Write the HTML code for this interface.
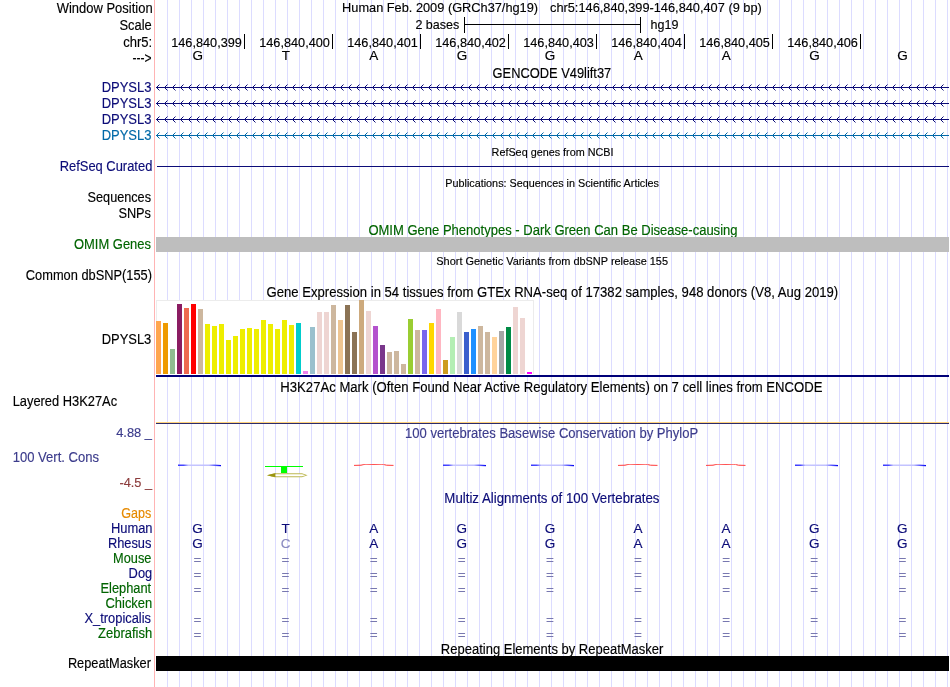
<!DOCTYPE html>
<html lang="en"><head><meta charset="utf-8"><title>UCSC Genome Browser - chr5:146,840,399-146,840,407</title>
<style>
html,body{margin:0;padding:0;background:#fff;}
svg{display:block;font-family:"Liberation Sans", sans-serif;will-change:transform;}
text{white-space:pre;stroke-width:0.15px;}
</style></head><body>
<svg width="950" height="687" viewBox="0 0 950 687">
<rect width="950" height="687" fill="#fff"/>
<path d="M167.5,0V687M179.5,0V687M191.5,0V687M203.5,0V687M215.5,0V687M227.5,0V687M239.5,0V687M251.5,0V687M263.5,0V687M275.5,0V687M287.5,0V687M299.5,0V687M311.5,0V687M323.5,0V687M335.5,0V687M347.5,0V687M359.5,0V687M371.5,0V687M383.5,0V687M395.5,0V687M407.5,0V687M419.5,0V687M431.5,0V687M443.5,0V687M455.5,0V687M467.5,0V687M479.5,0V687M491.5,0V687M503.5,0V687M515.5,0V687M527.5,0V687M539.5,0V687M551.5,0V687M563.5,0V687M575.5,0V687M587.5,0V687M599.5,0V687M611.5,0V687M623.5,0V687M635.5,0V687M647.5,0V687M659.5,0V687M671.5,0V687M683.5,0V687M695.5,0V687M707.5,0V687M719.5,0V687M731.5,0V687M743.5,0V687M755.5,0V687M767.5,0V687M779.5,0V687M791.5,0V687M803.5,0V687M815.5,0V687M827.5,0V687M839.5,0V687M851.5,0V687M863.5,0V687M875.5,0V687M887.5,0V687M899.5,0V687M911.5,0V687M923.5,0V687M935.5,0V687M947.5,0V687" stroke="#dcdcff" stroke-width="1" fill="none" shape-rendering="crispEdges"/>
<rect x="154" y="0" width="1" height="687" fill="#ffb4b4" shape-rendering="crispEdges"/>
<text x="56.7" y="12.5" text-anchor="start" fill="#000" stroke="#000" font-size="14" textLength="95.93" lengthAdjust="spacingAndGlyphs">Window Position</text>
<text x="119.5" y="29.5" text-anchor="start" fill="#000" stroke="#000" font-size="14" textLength="32.2" lengthAdjust="spacingAndGlyphs">Scale</text>
<text x="123.2" y="46.5" text-anchor="start" fill="#000" stroke="#000" font-size="14" textLength="28.93" lengthAdjust="spacingAndGlyphs">chr5:</text>
<text x="132.4" y="62.5" text-anchor="start" fill="#000" stroke="#000" font-size="14" textLength="19.05" lengthAdjust="spacingAndGlyphs">---&gt;</text>
<text x="101.67" y="91.5" text-anchor="start" fill="#0c0c78" stroke="#0c0c78" font-size="14" textLength="49.73" lengthAdjust="spacingAndGlyphs">DPYSL3</text>
<text x="101.67" y="107.5" text-anchor="start" fill="#0c0c78" stroke="#0c0c78" font-size="14" textLength="49.73" lengthAdjust="spacingAndGlyphs">DPYSL3</text>
<text x="101.67" y="123.5" text-anchor="start" fill="#0c0c78" stroke="#0c0c78" font-size="14" textLength="49.73" lengthAdjust="spacingAndGlyphs">DPYSL3</text>
<text x="101.67" y="139.5" text-anchor="start" fill="#0169a8" stroke="#0169a8" font-size="14" textLength="49.73" lengthAdjust="spacingAndGlyphs">DPYSL3</text>
<text x="59.68" y="170.5" text-anchor="start" fill="#0c0c78" stroke="#0c0c78" font-size="14" textLength="92.65" lengthAdjust="spacingAndGlyphs">RefSeq Curated</text>
<text x="87.6" y="201.5" text-anchor="start" fill="#000" stroke="#000" font-size="14" textLength="63.4" lengthAdjust="spacingAndGlyphs">Sequences</text>
<text x="118.4" y="217.5" text-anchor="start" fill="#000" stroke="#000" font-size="14" textLength="32.6" lengthAdjust="spacingAndGlyphs">SNPs</text>
<text x="74.0" y="248.5" text-anchor="start" fill="#006400" stroke="#006400" font-size="14" textLength="77.0" lengthAdjust="spacingAndGlyphs">OMIM Genes</text>
<text x="25.8" y="279.7" text-anchor="start" fill="#000" stroke="#000" font-size="14" textLength="126.21" lengthAdjust="spacingAndGlyphs">Common dbSNP(155)</text>
<text x="101.78" y="344" text-anchor="start" fill="#000" stroke="#000" font-size="14" textLength="49.53" lengthAdjust="spacingAndGlyphs">DPYSL3</text>
<text x="12.68" y="405.8" text-anchor="start" fill="#000" stroke="#000" font-size="14" textLength="104.42" lengthAdjust="spacingAndGlyphs">Layered H3K27Ac</text>
<text x="116.2" y="437" text-anchor="start" fill="#3c3c8c" stroke="#3c3c8c" font-size="13.2" textLength="35.85" lengthAdjust="spacingAndGlyphs">4.88 _</text>
<text x="12.67" y="461.5" text-anchor="start" fill="#3c3c8c" stroke="#3c3c8c" font-size="14" textLength="86.33" lengthAdjust="spacingAndGlyphs">100 Vert. Cons</text>
<text x="119.4" y="487" text-anchor="start" fill="#8c3c3c" stroke="#8c3c3c" font-size="13.2" textLength="32.66" lengthAdjust="spacingAndGlyphs">-4.5 _</text>
<text x="121.2" y="517.5" text-anchor="start" fill="#e68a00" stroke="#e68a00" font-size="14" textLength="30.0" lengthAdjust="spacingAndGlyphs">Gaps</text>
<text x="110.88" y="532.5" text-anchor="start" fill="#0c0c78" stroke="#0c0c78" font-size="14" textLength="41.65" lengthAdjust="spacingAndGlyphs">Human</text>
<text x="107.88" y="547.5" text-anchor="start" fill="#0c0c78" stroke="#0c0c78" font-size="14" textLength="43.52" lengthAdjust="spacingAndGlyphs">Rhesus</text>
<text x="113.09" y="562.5" text-anchor="start" fill="#006400" stroke="#006400" font-size="14" textLength="38.32" lengthAdjust="spacingAndGlyphs">Mouse</text>
<text x="128.58" y="577.5" text-anchor="start" fill="#0c0c78" stroke="#0c0c78" font-size="14" textLength="23.64" lengthAdjust="spacingAndGlyphs">Dog</text>
<text x="100.48" y="592.5" text-anchor="start" fill="#006400" stroke="#006400" font-size="14" textLength="50.72" lengthAdjust="spacingAndGlyphs">Elephant</text>
<text x="105.5" y="607.5" text-anchor="start" fill="#006400" stroke="#006400" font-size="14" textLength="46.73" lengthAdjust="spacingAndGlyphs">Chicken</text>
<text x="84.5" y="622.5" text-anchor="start" fill="#0c0c78" stroke="#0c0c78" font-size="14" textLength="66.5" lengthAdjust="spacingAndGlyphs">X_tropicalis</text>
<text x="98.1" y="637.5" text-anchor="start" fill="#006400" stroke="#006400" font-size="14" textLength="54.13" lengthAdjust="spacingAndGlyphs">Zebrafish</text>
<text x="67.89" y="667.5" text-anchor="start" fill="#000" stroke="#000" font-size="14" textLength="83.1" lengthAdjust="spacingAndGlyphs">RepeatMasker</text>
<text x="342.06" y="11.6" text-anchor="start" fill="#000" stroke="#000" font-size="13.6" textLength="196.04" lengthAdjust="spacingAndGlyphs">Human Feb. 2009 (GRCh37/hg19)</text>
<text x="550.0" y="11.6" text-anchor="start" fill="#000" stroke="#000" font-size="13.2" textLength="211.78" lengthAdjust="spacingAndGlyphs">chr5:146,840,399-146,840,407 (9 bp)</text>
<text x="415.4" y="29.2" text-anchor="start" fill="#000" stroke="#000" font-size="13.5" textLength="43.77" lengthAdjust="spacingAndGlyphs">2 bases</text>
<rect x="464" y="17" width="1" height="16" fill="#000" shape-rendering="crispEdges"/>
<rect x="640" y="17" width="1" height="16" fill="#000" shape-rendering="crispEdges"/>
<rect x="464" y="24" width="177" height="1" fill="#000" shape-rendering="crispEdges"/>
<text x="650.6" y="29.2" text-anchor="start" fill="#000" stroke="#000" font-size="13.5" textLength="27.87" lengthAdjust="spacingAndGlyphs">hg19</text>
<rect x="244" y="34" width="1" height="15" fill="#000" shape-rendering="crispEdges"/>
<text x="171.24" y="47" text-anchor="start" fill="#000" stroke="#000" font-size="13.2" textLength="70.69" lengthAdjust="spacingAndGlyphs">146,840,399</text>
<text x="197.65555555555554" y="60.2" text-anchor="middle" fill="#000" stroke="#000" font-size="13.5">G</text>
<rect x="332" y="34" width="1" height="15" fill="#000" shape-rendering="crispEdges"/>
<text x="259.24" y="47" text-anchor="start" fill="#000" stroke="#000" font-size="13.2" textLength="70.69" lengthAdjust="spacingAndGlyphs">146,840,400</text>
<text x="285.7666666666667" y="60.2" text-anchor="middle" fill="#000" stroke="#000" font-size="13.5">T</text>
<rect x="420" y="34" width="1" height="15" fill="#000" shape-rendering="crispEdges"/>
<text x="347.24" y="47" text-anchor="start" fill="#000" stroke="#000" font-size="13.2" textLength="70.69" lengthAdjust="spacingAndGlyphs">146,840,401</text>
<text x="373.8777777777778" y="60.2" text-anchor="middle" fill="#000" stroke="#000" font-size="13.5">A</text>
<rect x="508" y="34" width="1" height="15" fill="#000" shape-rendering="crispEdges"/>
<text x="435.24" y="47" text-anchor="start" fill="#000" stroke="#000" font-size="13.2" textLength="70.69" lengthAdjust="spacingAndGlyphs">146,840,402</text>
<text x="461.98888888888894" y="60.2" text-anchor="middle" fill="#000" stroke="#000" font-size="13.5">G</text>
<rect x="596" y="34" width="1" height="15" fill="#000" shape-rendering="crispEdges"/>
<text x="523.24" y="47" text-anchor="start" fill="#000" stroke="#000" font-size="13.2" textLength="70.69" lengthAdjust="spacingAndGlyphs">146,840,403</text>
<text x="550.1" y="60.2" text-anchor="middle" fill="#000" stroke="#000" font-size="13.5">G</text>
<rect x="684" y="34" width="1" height="15" fill="#000" shape-rendering="crispEdges"/>
<text x="611.24" y="47" text-anchor="start" fill="#000" stroke="#000" font-size="13.2" textLength="70.69" lengthAdjust="spacingAndGlyphs">146,840,404</text>
<text x="638.2111111111111" y="60.2" text-anchor="middle" fill="#000" stroke="#000" font-size="13.5">A</text>
<rect x="772" y="34" width="1" height="15" fill="#000" shape-rendering="crispEdges"/>
<text x="699.24" y="47" text-anchor="start" fill="#000" stroke="#000" font-size="13.2" textLength="70.69" lengthAdjust="spacingAndGlyphs">146,840,405</text>
<text x="726.3222222222223" y="60.2" text-anchor="middle" fill="#000" stroke="#000" font-size="13.5">A</text>
<rect x="860" y="34" width="1" height="15" fill="#000" shape-rendering="crispEdges"/>
<text x="787.24" y="47" text-anchor="start" fill="#000" stroke="#000" font-size="13.2" textLength="70.69" lengthAdjust="spacingAndGlyphs">146,840,406</text>
<text x="814.4333333333334" y="60.2" text-anchor="middle" fill="#000" stroke="#000" font-size="13.5">G</text>
<text x="902.5444444444445" y="60.2" text-anchor="middle" fill="#000" stroke="#000" font-size="13.5">G</text>
<text x="492.6" y="77.5" text-anchor="start" fill="#000" stroke="#000" font-size="14" textLength="118.6" lengthAdjust="spacingAndGlyphs">GENCODE V49lift37</text>
<text x="491.6" y="156" text-anchor="start" fill="#000" stroke="#000" font-size="11" textLength="121.96" lengthAdjust="spacingAndGlyphs">RefSeq genes from NCBI</text>
<text x="445.3" y="187" text-anchor="start" fill="#000" stroke="#000" font-size="11" textLength="213.71" lengthAdjust="spacingAndGlyphs">Publications: Sequences in Scientific Articles</text>
<text x="368.4" y="234.5" text-anchor="start" fill="#006400" stroke="#006400" font-size="14" textLength="369.13" lengthAdjust="spacingAndGlyphs">OMIM Gene Phenotypes - Dark Green Can Be Disease-causing</text>
<text x="436.3" y="265" text-anchor="start" fill="#000" stroke="#000" font-size="11" textLength="231.72" lengthAdjust="spacingAndGlyphs">Short Genetic Variants from dbSNP release 155</text>
<text x="266.6" y="296.5" text-anchor="start" fill="#000" stroke="#000" font-size="14" textLength="571.62" lengthAdjust="spacingAndGlyphs">Gene Expression in 54 tissues from GTEx RNA-seq of 17382 samples, 948 donors (V8, Aug 2019)</text>
<text x="280.36" y="391.6" text-anchor="start" fill="#000" stroke="#000" font-size="14" textLength="542.05" lengthAdjust="spacingAndGlyphs">H3K27Ac Mark (Often Found Near Active Regulatory Elements) on 7 cell lines from ENCODE</text>
<text x="405.07" y="437.6" text-anchor="start" fill="#3c3c8c" stroke="#3c3c8c" font-size="14" textLength="293.15" lengthAdjust="spacingAndGlyphs">100 vertebrates Basewise Conservation by PhyloP</text>
<text x="444.36" y="503.4" text-anchor="start" fill="#0c0c78" stroke="#0c0c78" font-size="14" textLength="215.14" lengthAdjust="spacingAndGlyphs">Multiz Alignments of 100 Vertebrates</text>
<text x="440.87" y="653.5" text-anchor="start" fill="#000" stroke="#000" font-size="14" textLength="222.51" lengthAdjust="spacingAndGlyphs">Repeating Elements by RepeatMasker</text>
<rect x="156" y="87" width="793" height="1" fill="#0c0c78" shape-rendering="crispEdges"/>
<path d="M159.5,84.5L156.5,87.5L159.5,90.5M167.5,84.5L164.5,87.5L167.5,90.5M175.5,84.5L172.5,87.5L175.5,90.5M183.5,84.5L180.5,87.5L183.5,90.5M191.5,84.5L188.5,87.5L191.5,90.5M199.5,84.5L196.5,87.5L199.5,90.5M207.5,84.5L204.5,87.5L207.5,90.5M215.5,84.5L212.5,87.5L215.5,90.5M223.5,84.5L220.5,87.5L223.5,90.5M231.5,84.5L228.5,87.5L231.5,90.5M239.5,84.5L236.5,87.5L239.5,90.5M247.5,84.5L244.5,87.5L247.5,90.5M255.5,84.5L252.5,87.5L255.5,90.5M263.5,84.5L260.5,87.5L263.5,90.5M271.5,84.5L268.5,87.5L271.5,90.5M279.5,84.5L276.5,87.5L279.5,90.5M287.5,84.5L284.5,87.5L287.5,90.5M295.5,84.5L292.5,87.5L295.5,90.5M303.5,84.5L300.5,87.5L303.5,90.5M311.5,84.5L308.5,87.5L311.5,90.5M319.5,84.5L316.5,87.5L319.5,90.5M327.5,84.5L324.5,87.5L327.5,90.5M335.5,84.5L332.5,87.5L335.5,90.5M343.5,84.5L340.5,87.5L343.5,90.5M351.5,84.5L348.5,87.5L351.5,90.5M359.5,84.5L356.5,87.5L359.5,90.5M367.5,84.5L364.5,87.5L367.5,90.5M375.5,84.5L372.5,87.5L375.5,90.5M383.5,84.5L380.5,87.5L383.5,90.5M391.5,84.5L388.5,87.5L391.5,90.5M399.5,84.5L396.5,87.5L399.5,90.5M407.5,84.5L404.5,87.5L407.5,90.5M415.5,84.5L412.5,87.5L415.5,90.5M423.5,84.5L420.5,87.5L423.5,90.5M431.5,84.5L428.5,87.5L431.5,90.5M439.5,84.5L436.5,87.5L439.5,90.5M447.5,84.5L444.5,87.5L447.5,90.5M455.5,84.5L452.5,87.5L455.5,90.5M463.5,84.5L460.5,87.5L463.5,90.5M471.5,84.5L468.5,87.5L471.5,90.5M479.5,84.5L476.5,87.5L479.5,90.5M487.5,84.5L484.5,87.5L487.5,90.5M495.5,84.5L492.5,87.5L495.5,90.5M503.5,84.5L500.5,87.5L503.5,90.5M511.5,84.5L508.5,87.5L511.5,90.5M519.5,84.5L516.5,87.5L519.5,90.5M527.5,84.5L524.5,87.5L527.5,90.5M535.5,84.5L532.5,87.5L535.5,90.5M543.5,84.5L540.5,87.5L543.5,90.5M551.5,84.5L548.5,87.5L551.5,90.5M559.5,84.5L556.5,87.5L559.5,90.5M567.5,84.5L564.5,87.5L567.5,90.5M575.5,84.5L572.5,87.5L575.5,90.5M583.5,84.5L580.5,87.5L583.5,90.5M591.5,84.5L588.5,87.5L591.5,90.5M599.5,84.5L596.5,87.5L599.5,90.5M607.5,84.5L604.5,87.5L607.5,90.5M615.5,84.5L612.5,87.5L615.5,90.5M623.5,84.5L620.5,87.5L623.5,90.5M631.5,84.5L628.5,87.5L631.5,90.5M639.5,84.5L636.5,87.5L639.5,90.5M647.5,84.5L644.5,87.5L647.5,90.5M655.5,84.5L652.5,87.5L655.5,90.5M663.5,84.5L660.5,87.5L663.5,90.5M671.5,84.5L668.5,87.5L671.5,90.5M679.5,84.5L676.5,87.5L679.5,90.5M687.5,84.5L684.5,87.5L687.5,90.5M695.5,84.5L692.5,87.5L695.5,90.5M703.5,84.5L700.5,87.5L703.5,90.5M711.5,84.5L708.5,87.5L711.5,90.5M719.5,84.5L716.5,87.5L719.5,90.5M727.5,84.5L724.5,87.5L727.5,90.5M735.5,84.5L732.5,87.5L735.5,90.5M743.5,84.5L740.5,87.5L743.5,90.5M751.5,84.5L748.5,87.5L751.5,90.5M759.5,84.5L756.5,87.5L759.5,90.5M767.5,84.5L764.5,87.5L767.5,90.5M775.5,84.5L772.5,87.5L775.5,90.5M783.5,84.5L780.5,87.5L783.5,90.5M791.5,84.5L788.5,87.5L791.5,90.5M799.5,84.5L796.5,87.5L799.5,90.5M807.5,84.5L804.5,87.5L807.5,90.5M815.5,84.5L812.5,87.5L815.5,90.5M823.5,84.5L820.5,87.5L823.5,90.5M831.5,84.5L828.5,87.5L831.5,90.5M839.5,84.5L836.5,87.5L839.5,90.5M847.5,84.5L844.5,87.5L847.5,90.5M855.5,84.5L852.5,87.5L855.5,90.5M863.5,84.5L860.5,87.5L863.5,90.5M871.5,84.5L868.5,87.5L871.5,90.5M879.5,84.5L876.5,87.5L879.5,90.5M887.5,84.5L884.5,87.5L887.5,90.5M895.5,84.5L892.5,87.5L895.5,90.5M903.5,84.5L900.5,87.5L903.5,90.5M911.5,84.5L908.5,87.5L911.5,90.5M919.5,84.5L916.5,87.5L919.5,90.5M927.5,84.5L924.5,87.5L927.5,90.5M935.5,84.5L932.5,87.5L935.5,90.5M943.5,84.5L940.5,87.5L943.5,90.5" stroke="#0c0c78" stroke-width="1" fill="none"/>
<rect x="156" y="103" width="793" height="1" fill="#0c0c78" shape-rendering="crispEdges"/>
<path d="M159.5,100.5L156.5,103.5L159.5,106.5M167.5,100.5L164.5,103.5L167.5,106.5M175.5,100.5L172.5,103.5L175.5,106.5M183.5,100.5L180.5,103.5L183.5,106.5M191.5,100.5L188.5,103.5L191.5,106.5M199.5,100.5L196.5,103.5L199.5,106.5M207.5,100.5L204.5,103.5L207.5,106.5M215.5,100.5L212.5,103.5L215.5,106.5M223.5,100.5L220.5,103.5L223.5,106.5M231.5,100.5L228.5,103.5L231.5,106.5M239.5,100.5L236.5,103.5L239.5,106.5M247.5,100.5L244.5,103.5L247.5,106.5M255.5,100.5L252.5,103.5L255.5,106.5M263.5,100.5L260.5,103.5L263.5,106.5M271.5,100.5L268.5,103.5L271.5,106.5M279.5,100.5L276.5,103.5L279.5,106.5M287.5,100.5L284.5,103.5L287.5,106.5M295.5,100.5L292.5,103.5L295.5,106.5M303.5,100.5L300.5,103.5L303.5,106.5M311.5,100.5L308.5,103.5L311.5,106.5M319.5,100.5L316.5,103.5L319.5,106.5M327.5,100.5L324.5,103.5L327.5,106.5M335.5,100.5L332.5,103.5L335.5,106.5M343.5,100.5L340.5,103.5L343.5,106.5M351.5,100.5L348.5,103.5L351.5,106.5M359.5,100.5L356.5,103.5L359.5,106.5M367.5,100.5L364.5,103.5L367.5,106.5M375.5,100.5L372.5,103.5L375.5,106.5M383.5,100.5L380.5,103.5L383.5,106.5M391.5,100.5L388.5,103.5L391.5,106.5M399.5,100.5L396.5,103.5L399.5,106.5M407.5,100.5L404.5,103.5L407.5,106.5M415.5,100.5L412.5,103.5L415.5,106.5M423.5,100.5L420.5,103.5L423.5,106.5M431.5,100.5L428.5,103.5L431.5,106.5M439.5,100.5L436.5,103.5L439.5,106.5M447.5,100.5L444.5,103.5L447.5,106.5M455.5,100.5L452.5,103.5L455.5,106.5M463.5,100.5L460.5,103.5L463.5,106.5M471.5,100.5L468.5,103.5L471.5,106.5M479.5,100.5L476.5,103.5L479.5,106.5M487.5,100.5L484.5,103.5L487.5,106.5M495.5,100.5L492.5,103.5L495.5,106.5M503.5,100.5L500.5,103.5L503.5,106.5M511.5,100.5L508.5,103.5L511.5,106.5M519.5,100.5L516.5,103.5L519.5,106.5M527.5,100.5L524.5,103.5L527.5,106.5M535.5,100.5L532.5,103.5L535.5,106.5M543.5,100.5L540.5,103.5L543.5,106.5M551.5,100.5L548.5,103.5L551.5,106.5M559.5,100.5L556.5,103.5L559.5,106.5M567.5,100.5L564.5,103.5L567.5,106.5M575.5,100.5L572.5,103.5L575.5,106.5M583.5,100.5L580.5,103.5L583.5,106.5M591.5,100.5L588.5,103.5L591.5,106.5M599.5,100.5L596.5,103.5L599.5,106.5M607.5,100.5L604.5,103.5L607.5,106.5M615.5,100.5L612.5,103.5L615.5,106.5M623.5,100.5L620.5,103.5L623.5,106.5M631.5,100.5L628.5,103.5L631.5,106.5M639.5,100.5L636.5,103.5L639.5,106.5M647.5,100.5L644.5,103.5L647.5,106.5M655.5,100.5L652.5,103.5L655.5,106.5M663.5,100.5L660.5,103.5L663.5,106.5M671.5,100.5L668.5,103.5L671.5,106.5M679.5,100.5L676.5,103.5L679.5,106.5M687.5,100.5L684.5,103.5L687.5,106.5M695.5,100.5L692.5,103.5L695.5,106.5M703.5,100.5L700.5,103.5L703.5,106.5M711.5,100.5L708.5,103.5L711.5,106.5M719.5,100.5L716.5,103.5L719.5,106.5M727.5,100.5L724.5,103.5L727.5,106.5M735.5,100.5L732.5,103.5L735.5,106.5M743.5,100.5L740.5,103.5L743.5,106.5M751.5,100.5L748.5,103.5L751.5,106.5M759.5,100.5L756.5,103.5L759.5,106.5M767.5,100.5L764.5,103.5L767.5,106.5M775.5,100.5L772.5,103.5L775.5,106.5M783.5,100.5L780.5,103.5L783.5,106.5M791.5,100.5L788.5,103.5L791.5,106.5M799.5,100.5L796.5,103.5L799.5,106.5M807.5,100.5L804.5,103.5L807.5,106.5M815.5,100.5L812.5,103.5L815.5,106.5M823.5,100.5L820.5,103.5L823.5,106.5M831.5,100.5L828.5,103.5L831.5,106.5M839.5,100.5L836.5,103.5L839.5,106.5M847.5,100.5L844.5,103.5L847.5,106.5M855.5,100.5L852.5,103.5L855.5,106.5M863.5,100.5L860.5,103.5L863.5,106.5M871.5,100.5L868.5,103.5L871.5,106.5M879.5,100.5L876.5,103.5L879.5,106.5M887.5,100.5L884.5,103.5L887.5,106.5M895.5,100.5L892.5,103.5L895.5,106.5M903.5,100.5L900.5,103.5L903.5,106.5M911.5,100.5L908.5,103.5L911.5,106.5M919.5,100.5L916.5,103.5L919.5,106.5M927.5,100.5L924.5,103.5L927.5,106.5M935.5,100.5L932.5,103.5L935.5,106.5M943.5,100.5L940.5,103.5L943.5,106.5" stroke="#0c0c78" stroke-width="1" fill="none"/>
<rect x="156" y="119" width="793" height="1" fill="#0c0c78" shape-rendering="crispEdges"/>
<path d="M159.5,116.5L156.5,119.5L159.5,122.5M167.5,116.5L164.5,119.5L167.5,122.5M175.5,116.5L172.5,119.5L175.5,122.5M183.5,116.5L180.5,119.5L183.5,122.5M191.5,116.5L188.5,119.5L191.5,122.5M199.5,116.5L196.5,119.5L199.5,122.5M207.5,116.5L204.5,119.5L207.5,122.5M215.5,116.5L212.5,119.5L215.5,122.5M223.5,116.5L220.5,119.5L223.5,122.5M231.5,116.5L228.5,119.5L231.5,122.5M239.5,116.5L236.5,119.5L239.5,122.5M247.5,116.5L244.5,119.5L247.5,122.5M255.5,116.5L252.5,119.5L255.5,122.5M263.5,116.5L260.5,119.5L263.5,122.5M271.5,116.5L268.5,119.5L271.5,122.5M279.5,116.5L276.5,119.5L279.5,122.5M287.5,116.5L284.5,119.5L287.5,122.5M295.5,116.5L292.5,119.5L295.5,122.5M303.5,116.5L300.5,119.5L303.5,122.5M311.5,116.5L308.5,119.5L311.5,122.5M319.5,116.5L316.5,119.5L319.5,122.5M327.5,116.5L324.5,119.5L327.5,122.5M335.5,116.5L332.5,119.5L335.5,122.5M343.5,116.5L340.5,119.5L343.5,122.5M351.5,116.5L348.5,119.5L351.5,122.5M359.5,116.5L356.5,119.5L359.5,122.5M367.5,116.5L364.5,119.5L367.5,122.5M375.5,116.5L372.5,119.5L375.5,122.5M383.5,116.5L380.5,119.5L383.5,122.5M391.5,116.5L388.5,119.5L391.5,122.5M399.5,116.5L396.5,119.5L399.5,122.5M407.5,116.5L404.5,119.5L407.5,122.5M415.5,116.5L412.5,119.5L415.5,122.5M423.5,116.5L420.5,119.5L423.5,122.5M431.5,116.5L428.5,119.5L431.5,122.5M439.5,116.5L436.5,119.5L439.5,122.5M447.5,116.5L444.5,119.5L447.5,122.5M455.5,116.5L452.5,119.5L455.5,122.5M463.5,116.5L460.5,119.5L463.5,122.5M471.5,116.5L468.5,119.5L471.5,122.5M479.5,116.5L476.5,119.5L479.5,122.5M487.5,116.5L484.5,119.5L487.5,122.5M495.5,116.5L492.5,119.5L495.5,122.5M503.5,116.5L500.5,119.5L503.5,122.5M511.5,116.5L508.5,119.5L511.5,122.5M519.5,116.5L516.5,119.5L519.5,122.5M527.5,116.5L524.5,119.5L527.5,122.5M535.5,116.5L532.5,119.5L535.5,122.5M543.5,116.5L540.5,119.5L543.5,122.5M551.5,116.5L548.5,119.5L551.5,122.5M559.5,116.5L556.5,119.5L559.5,122.5M567.5,116.5L564.5,119.5L567.5,122.5M575.5,116.5L572.5,119.5L575.5,122.5M583.5,116.5L580.5,119.5L583.5,122.5M591.5,116.5L588.5,119.5L591.5,122.5M599.5,116.5L596.5,119.5L599.5,122.5M607.5,116.5L604.5,119.5L607.5,122.5M615.5,116.5L612.5,119.5L615.5,122.5M623.5,116.5L620.5,119.5L623.5,122.5M631.5,116.5L628.5,119.5L631.5,122.5M639.5,116.5L636.5,119.5L639.5,122.5M647.5,116.5L644.5,119.5L647.5,122.5M655.5,116.5L652.5,119.5L655.5,122.5M663.5,116.5L660.5,119.5L663.5,122.5M671.5,116.5L668.5,119.5L671.5,122.5M679.5,116.5L676.5,119.5L679.5,122.5M687.5,116.5L684.5,119.5L687.5,122.5M695.5,116.5L692.5,119.5L695.5,122.5M703.5,116.5L700.5,119.5L703.5,122.5M711.5,116.5L708.5,119.5L711.5,122.5M719.5,116.5L716.5,119.5L719.5,122.5M727.5,116.5L724.5,119.5L727.5,122.5M735.5,116.5L732.5,119.5L735.5,122.5M743.5,116.5L740.5,119.5L743.5,122.5M751.5,116.5L748.5,119.5L751.5,122.5M759.5,116.5L756.5,119.5L759.5,122.5M767.5,116.5L764.5,119.5L767.5,122.5M775.5,116.5L772.5,119.5L775.5,122.5M783.5,116.5L780.5,119.5L783.5,122.5M791.5,116.5L788.5,119.5L791.5,122.5M799.5,116.5L796.5,119.5L799.5,122.5M807.5,116.5L804.5,119.5L807.5,122.5M815.5,116.5L812.5,119.5L815.5,122.5M823.5,116.5L820.5,119.5L823.5,122.5M831.5,116.5L828.5,119.5L831.5,122.5M839.5,116.5L836.5,119.5L839.5,122.5M847.5,116.5L844.5,119.5L847.5,122.5M855.5,116.5L852.5,119.5L855.5,122.5M863.5,116.5L860.5,119.5L863.5,122.5M871.5,116.5L868.5,119.5L871.5,122.5M879.5,116.5L876.5,119.5L879.5,122.5M887.5,116.5L884.5,119.5L887.5,122.5M895.5,116.5L892.5,119.5L895.5,122.5M903.5,116.5L900.5,119.5L903.5,122.5M911.5,116.5L908.5,119.5L911.5,122.5M919.5,116.5L916.5,119.5L919.5,122.5M927.5,116.5L924.5,119.5L927.5,122.5M935.5,116.5L932.5,119.5L935.5,122.5M943.5,116.5L940.5,119.5L943.5,122.5" stroke="#0c0c78" stroke-width="1" fill="none"/>
<rect x="156" y="135" width="793" height="1" fill="#0169a8" shape-rendering="crispEdges"/>
<path d="M159.5,132.5L156.5,135.5L159.5,138.5M167.5,132.5L164.5,135.5L167.5,138.5M175.5,132.5L172.5,135.5L175.5,138.5M183.5,132.5L180.5,135.5L183.5,138.5M191.5,132.5L188.5,135.5L191.5,138.5M199.5,132.5L196.5,135.5L199.5,138.5M207.5,132.5L204.5,135.5L207.5,138.5M215.5,132.5L212.5,135.5L215.5,138.5M223.5,132.5L220.5,135.5L223.5,138.5M231.5,132.5L228.5,135.5L231.5,138.5M239.5,132.5L236.5,135.5L239.5,138.5M247.5,132.5L244.5,135.5L247.5,138.5M255.5,132.5L252.5,135.5L255.5,138.5M263.5,132.5L260.5,135.5L263.5,138.5M271.5,132.5L268.5,135.5L271.5,138.5M279.5,132.5L276.5,135.5L279.5,138.5M287.5,132.5L284.5,135.5L287.5,138.5M295.5,132.5L292.5,135.5L295.5,138.5M303.5,132.5L300.5,135.5L303.5,138.5M311.5,132.5L308.5,135.5L311.5,138.5M319.5,132.5L316.5,135.5L319.5,138.5M327.5,132.5L324.5,135.5L327.5,138.5M335.5,132.5L332.5,135.5L335.5,138.5M343.5,132.5L340.5,135.5L343.5,138.5M351.5,132.5L348.5,135.5L351.5,138.5M359.5,132.5L356.5,135.5L359.5,138.5M367.5,132.5L364.5,135.5L367.5,138.5M375.5,132.5L372.5,135.5L375.5,138.5M383.5,132.5L380.5,135.5L383.5,138.5M391.5,132.5L388.5,135.5L391.5,138.5M399.5,132.5L396.5,135.5L399.5,138.5M407.5,132.5L404.5,135.5L407.5,138.5M415.5,132.5L412.5,135.5L415.5,138.5M423.5,132.5L420.5,135.5L423.5,138.5M431.5,132.5L428.5,135.5L431.5,138.5M439.5,132.5L436.5,135.5L439.5,138.5M447.5,132.5L444.5,135.5L447.5,138.5M455.5,132.5L452.5,135.5L455.5,138.5M463.5,132.5L460.5,135.5L463.5,138.5M471.5,132.5L468.5,135.5L471.5,138.5M479.5,132.5L476.5,135.5L479.5,138.5M487.5,132.5L484.5,135.5L487.5,138.5M495.5,132.5L492.5,135.5L495.5,138.5M503.5,132.5L500.5,135.5L503.5,138.5M511.5,132.5L508.5,135.5L511.5,138.5M519.5,132.5L516.5,135.5L519.5,138.5M527.5,132.5L524.5,135.5L527.5,138.5M535.5,132.5L532.5,135.5L535.5,138.5M543.5,132.5L540.5,135.5L543.5,138.5M551.5,132.5L548.5,135.5L551.5,138.5M559.5,132.5L556.5,135.5L559.5,138.5M567.5,132.5L564.5,135.5L567.5,138.5M575.5,132.5L572.5,135.5L575.5,138.5M583.5,132.5L580.5,135.5L583.5,138.5M591.5,132.5L588.5,135.5L591.5,138.5M599.5,132.5L596.5,135.5L599.5,138.5M607.5,132.5L604.5,135.5L607.5,138.5M615.5,132.5L612.5,135.5L615.5,138.5M623.5,132.5L620.5,135.5L623.5,138.5M631.5,132.5L628.5,135.5L631.5,138.5M639.5,132.5L636.5,135.5L639.5,138.5M647.5,132.5L644.5,135.5L647.5,138.5M655.5,132.5L652.5,135.5L655.5,138.5M663.5,132.5L660.5,135.5L663.5,138.5M671.5,132.5L668.5,135.5L671.5,138.5M679.5,132.5L676.5,135.5L679.5,138.5M687.5,132.5L684.5,135.5L687.5,138.5M695.5,132.5L692.5,135.5L695.5,138.5M703.5,132.5L700.5,135.5L703.5,138.5M711.5,132.5L708.5,135.5L711.5,138.5M719.5,132.5L716.5,135.5L719.5,138.5M727.5,132.5L724.5,135.5L727.5,138.5M735.5,132.5L732.5,135.5L735.5,138.5M743.5,132.5L740.5,135.5L743.5,138.5M751.5,132.5L748.5,135.5L751.5,138.5M759.5,132.5L756.5,135.5L759.5,138.5M767.5,132.5L764.5,135.5L767.5,138.5M775.5,132.5L772.5,135.5L775.5,138.5M783.5,132.5L780.5,135.5L783.5,138.5M791.5,132.5L788.5,135.5L791.5,138.5M799.5,132.5L796.5,135.5L799.5,138.5M807.5,132.5L804.5,135.5L807.5,138.5M815.5,132.5L812.5,135.5L815.5,138.5M823.5,132.5L820.5,135.5L823.5,138.5M831.5,132.5L828.5,135.5L831.5,138.5M839.5,132.5L836.5,135.5L839.5,138.5M847.5,132.5L844.5,135.5L847.5,138.5M855.5,132.5L852.5,135.5L855.5,138.5M863.5,132.5L860.5,135.5L863.5,138.5M871.5,132.5L868.5,135.5L871.5,138.5M879.5,132.5L876.5,135.5L879.5,138.5M887.5,132.5L884.5,135.5L887.5,138.5M895.5,132.5L892.5,135.5L895.5,138.5M903.5,132.5L900.5,135.5L903.5,138.5M911.5,132.5L908.5,135.5L911.5,138.5M919.5,132.5L916.5,135.5L919.5,138.5M927.5,132.5L924.5,135.5L927.5,138.5M935.5,132.5L932.5,135.5L935.5,138.5M943.5,132.5L940.5,135.5L943.5,138.5" stroke="#0169a8" stroke-width="1" fill="none"/>
<rect x="157" y="166" width="792" height="1" fill="#0c0c78" shape-rendering="crispEdges"/>
<rect x="156" y="237" width="793" height="15" fill="#bebebe" shape-rendering="crispEdges"/>
<rect x="156" y="300" width="378" height="75" fill="#fff" shape-rendering="crispEdges"/>
<path d="M156.5,374V300.5H533.5V374" stroke="#ececec" fill="none" shape-rendering="crispEdges"/>
<rect x="156" y="321" width="5" height="53" fill="#FFA54F" shape-rendering="crispEdges"/>
<rect x="163" y="323" width="5" height="51" fill="#EE9A00" shape-rendering="crispEdges"/>
<rect x="170" y="349" width="5" height="25" fill="#8FBC8F" shape-rendering="crispEdges"/>
<rect x="177" y="304" width="5" height="70" fill="#8B1C62" shape-rendering="crispEdges"/>
<rect x="184" y="308" width="5" height="66" fill="#EE6A50" shape-rendering="crispEdges"/>
<rect x="191" y="304" width="5" height="70" fill="#FF0000" shape-rendering="crispEdges"/>
<rect x="198" y="309" width="5" height="65" fill="#CDB79E" shape-rendering="crispEdges"/>
<rect x="205" y="324" width="5" height="50" fill="#EEEE00" shape-rendering="crispEdges"/>
<rect x="212" y="326" width="5" height="48" fill="#EEEE00" shape-rendering="crispEdges"/>
<rect x="219" y="324" width="5" height="50" fill="#EEEE00" shape-rendering="crispEdges"/>
<rect x="226" y="340" width="5" height="34" fill="#EEEE00" shape-rendering="crispEdges"/>
<rect x="233" y="336" width="5" height="38" fill="#EEEE00" shape-rendering="crispEdges"/>
<rect x="240" y="329" width="5" height="45" fill="#EEEE00" shape-rendering="crispEdges"/>
<rect x="247" y="328" width="5" height="46" fill="#EEEE00" shape-rendering="crispEdges"/>
<rect x="254" y="329" width="5" height="45" fill="#EEEE00" shape-rendering="crispEdges"/>
<rect x="261" y="320" width="5" height="54" fill="#EEEE00" shape-rendering="crispEdges"/>
<rect x="268" y="324" width="5" height="50" fill="#EEEE00" shape-rendering="crispEdges"/>
<rect x="275" y="329" width="5" height="45" fill="#EEEE00" shape-rendering="crispEdges"/>
<rect x="282" y="320" width="5" height="54" fill="#EEEE00" shape-rendering="crispEdges"/>
<rect x="289" y="325" width="5" height="49" fill="#EEEE00" shape-rendering="crispEdges"/>
<rect x="296" y="323" width="5" height="51" fill="#00CDCD" shape-rendering="crispEdges"/>
<rect x="303" y="371" width="5" height="3" fill="#EE82EE" shape-rendering="crispEdges"/>
<rect x="310" y="327" width="5" height="47" fill="#9AC0CD" shape-rendering="crispEdges"/>
<rect x="317" y="312" width="5" height="62" fill="#EED5D2" shape-rendering="crispEdges"/>
<rect x="324" y="312" width="5" height="62" fill="#EED5D2" shape-rendering="crispEdges"/>
<rect x="331" y="305" width="5" height="69" fill="#CDB79E" shape-rendering="crispEdges"/>
<rect x="338" y="320" width="5" height="54" fill="#EEC591" shape-rendering="crispEdges"/>
<rect x="345" y="305" width="5" height="69" fill="#8B7355" shape-rendering="crispEdges"/>
<rect x="352" y="332" width="5" height="42" fill="#8B7355" shape-rendering="crispEdges"/>
<rect x="359" y="300" width="5" height="74" fill="#CDAA7D" shape-rendering="crispEdges"/>
<rect x="366" y="311" width="5" height="63" fill="#EED5D2" shape-rendering="crispEdges"/>
<rect x="373" y="326" width="5" height="48" fill="#B452CD" shape-rendering="crispEdges"/>
<rect x="380" y="345" width="5" height="29" fill="#7A378B" shape-rendering="crispEdges"/>
<rect x="387" y="352" width="5" height="22" fill="#CDB79E" shape-rendering="crispEdges"/>
<rect x="394" y="351" width="5" height="23" fill="#CDB79E" shape-rendering="crispEdges"/>
<rect x="401" y="364" width="5" height="10" fill="#CDB79E" shape-rendering="crispEdges"/>
<rect x="408" y="319" width="5" height="55" fill="#9ACD32" shape-rendering="crispEdges"/>
<rect x="415" y="330" width="5" height="44" fill="#CDB79E" shape-rendering="crispEdges"/>
<rect x="422" y="330" width="5" height="44" fill="#7A67EE" shape-rendering="crispEdges"/>
<rect x="429" y="323" width="5" height="51" fill="#FFD700" shape-rendering="crispEdges"/>
<rect x="436" y="309" width="5" height="65" fill="#FFB6C1" shape-rendering="crispEdges"/>
<rect x="443" y="360" width="5" height="14" fill="#CD9B1D" shape-rendering="crispEdges"/>
<rect x="450" y="337" width="5" height="37" fill="#B4EEB4" shape-rendering="crispEdges"/>
<rect x="457" y="312" width="5" height="62" fill="#D9D9D9" shape-rendering="crispEdges"/>
<rect x="464" y="332" width="5" height="42" fill="#3A5FCD" shape-rendering="crispEdges"/>
<rect x="471" y="329" width="5" height="45" fill="#1E90FF" shape-rendering="crispEdges"/>
<rect x="478" y="326" width="5" height="48" fill="#CDB79E" shape-rendering="crispEdges"/>
<rect x="485" y="332" width="5" height="42" fill="#CDB79E" shape-rendering="crispEdges"/>
<rect x="492" y="337" width="5" height="37" fill="#FFD39B" shape-rendering="crispEdges"/>
<rect x="499" y="331" width="5" height="43" fill="#A6A6A6" shape-rendering="crispEdges"/>
<rect x="506" y="327" width="5" height="47" fill="#008B45" shape-rendering="crispEdges"/>
<rect x="513" y="307" width="5" height="67" fill="#EED5D2" shape-rendering="crispEdges"/>
<rect x="520" y="318" width="5" height="56" fill="#EED5D2" shape-rendering="crispEdges"/>
<rect x="527" y="372" width="5" height="2" fill="#FF00FF" shape-rendering="crispEdges"/>
<rect x="156" y="375" width="793" height="2" fill="#000078" shape-rendering="crispEdges"/>
<rect x="156" y="422" width="793" height="1" fill="#ffd27a" shape-rendering="crispEdges"/>
<rect x="156" y="423" width="793" height="1" fill="#2c2c6c" shape-rendering="crispEdges"/>
<defs><linearGradient id="gG" x1="0" x2="1" y1="0" y2="0"><stop offset="0" stop-color="#3a3aff"/><stop offset="0.13" stop-color="#4a4aff"/><stop offset="0.24" stop-color="#c6c6ff"/><stop offset="0.72" stop-color="#c0c0ff"/><stop offset="0.86" stop-color="#5a5aff"/><stop offset="1" stop-color="#0000f0"/></linearGradient><linearGradient id="gA" x1="0" x2="1" y1="0" y2="0"><stop offset="0" stop-color="#ff4040"/><stop offset="0.2" stop-color="#ff3030"/><stop offset="0.3" stop-color="#ff8080"/><stop offset="0.5" stop-color="#ff5050"/><stop offset="0.7" stop-color="#ff8080"/><stop offset="0.8" stop-color="#ff3030"/><stop offset="1" stop-color="#ff4040"/></linearGradient></defs>
<path d="M178,464.5 H214 L221,464.9 V466.3 L214,465.9 H185 L178,466 Z" fill="url(#gG)"/>
<rect x="265" y="466" width="38" height="1" fill="#00ff00" shape-rendering="crispEdges"/>
<rect x="281" y="467" width="6" height="6" fill="#00ff00" shape-rendering="crispEdges"/>
<path d="M267,475.2 L274.5,473.2 L302,473.2 L307.6,475.2 L302,477.2 L274.5,477.2 Z" fill="#bdb750"/>
<path d="M267,475.2 L272,473.9 L275.5,473.3 L275.5,477.1 L272,476.5 Z" fill="#9a9410"/>
<path d="M275.5,474.2 H302 L305.6,475.2 L302,476.2 H275.5 Z" fill="#fff"/>
<path d="M354,465.4 L361,465.2 L364,464.5 L383.5,464.5 L386.5,465.2 L393.5,465.4" stroke="url(#gA)" stroke-width="1" fill="none"/>
<path d="M443,464.5 H479 L486,464.9 V466.3 L479,465.9 H450 L443,466 Z" fill="url(#gG)"/>
<path d="M531,464.5 H567 L574,464.9 V466.3 L567,465.9 H538 L531,466 Z" fill="url(#gG)"/>
<path d="M618,465.4 L625,465.2 L628,464.5 L647.5,464.5 L650.5,465.2 L657.5,465.4" stroke="url(#gA)" stroke-width="1" fill="none"/>
<path d="M706,465.4 L713,465.2 L716,464.5 L735.5,464.5 L738.5,465.2 L745.5,465.4" stroke="url(#gA)" stroke-width="1" fill="none"/>
<path d="M795,464.5 H831 L838,464.9 V466.3 L831,465.9 H802 L795,466 Z" fill="url(#gG)"/>
<path d="M883,464.5 H919 L926,464.9 V466.3 L919,465.9 H890 L883,466 Z" fill="url(#gG)"/>
<text x="197.45555555555555" y="532.5" text-anchor="middle" fill="#0c0c78" stroke="#0c0c78" font-size="13.5">G</text>
<text x="285.56666666666666" y="532.5" text-anchor="middle" fill="#0c0c78" stroke="#0c0c78" font-size="13.5">T</text>
<text x="373.67777777777775" y="532.5" text-anchor="middle" fill="#0c0c78" stroke="#0c0c78" font-size="13.5">A</text>
<text x="461.7888888888889" y="532.5" text-anchor="middle" fill="#0c0c78" stroke="#0c0c78" font-size="13.5">G</text>
<text x="549.9" y="532.5" text-anchor="middle" fill="#0c0c78" stroke="#0c0c78" font-size="13.5">G</text>
<text x="638.0111111111111" y="532.5" text-anchor="middle" fill="#0c0c78" stroke="#0c0c78" font-size="13.5">A</text>
<text x="726.1222222222223" y="532.5" text-anchor="middle" fill="#0c0c78" stroke="#0c0c78" font-size="13.5">A</text>
<text x="814.2333333333333" y="532.5" text-anchor="middle" fill="#0c0c78" stroke="#0c0c78" font-size="13.5">G</text>
<text x="902.3444444444444" y="532.5" text-anchor="middle" fill="#0c0c78" stroke="#0c0c78" font-size="13.5">G</text>
<text x="197.45555555555555" y="547.5" text-anchor="middle" fill="#0c0c78" stroke="#0c0c78" font-size="13.5">G</text>
<text x="285.56666666666666" y="547.5" text-anchor="middle" fill="#8a8ac0" stroke="#8a8ac0" font-size="13.5">C</text>
<text x="373.67777777777775" y="547.5" text-anchor="middle" fill="#0c0c78" stroke="#0c0c78" font-size="13.5">A</text>
<text x="461.7888888888889" y="547.5" text-anchor="middle" fill="#0c0c78" stroke="#0c0c78" font-size="13.5">G</text>
<text x="549.9" y="547.5" text-anchor="middle" fill="#0c0c78" stroke="#0c0c78" font-size="13.5">G</text>
<text x="638.0111111111111" y="547.5" text-anchor="middle" fill="#0c0c78" stroke="#0c0c78" font-size="13.5">A</text>
<text x="726.1222222222223" y="547.5" text-anchor="middle" fill="#0c0c78" stroke="#0c0c78" font-size="13.5">A</text>
<text x="814.2333333333333" y="547.5" text-anchor="middle" fill="#0c0c78" stroke="#0c0c78" font-size="13.5">G</text>
<text x="902.3444444444444" y="547.5" text-anchor="middle" fill="#0c0c78" stroke="#0c0c78" font-size="13.5">G</text>
<text x="197.45555555555555" y="563.5" text-anchor="middle" fill="#7878b0" stroke="#7878b0" font-size="13.5">=</text>
<text x="285.56666666666666" y="563.5" text-anchor="middle" fill="#7878b0" stroke="#7878b0" font-size="13.5">=</text>
<text x="373.67777777777775" y="563.5" text-anchor="middle" fill="#7878b0" stroke="#7878b0" font-size="13.5">=</text>
<text x="461.7888888888889" y="563.5" text-anchor="middle" fill="#7878b0" stroke="#7878b0" font-size="13.5">=</text>
<text x="549.9" y="563.5" text-anchor="middle" fill="#7878b0" stroke="#7878b0" font-size="13.5">=</text>
<text x="638.0111111111111" y="563.5" text-anchor="middle" fill="#7878b0" stroke="#7878b0" font-size="13.5">=</text>
<text x="726.1222222222223" y="563.5" text-anchor="middle" fill="#7878b0" stroke="#7878b0" font-size="13.5">=</text>
<text x="814.2333333333333" y="563.5" text-anchor="middle" fill="#7878b0" stroke="#7878b0" font-size="13.5">=</text>
<text x="902.3444444444444" y="563.5" text-anchor="middle" fill="#7878b0" stroke="#7878b0" font-size="13.5">=</text>
<text x="197.45555555555555" y="578.5" text-anchor="middle" fill="#7878b0" stroke="#7878b0" font-size="13.5">=</text>
<text x="285.56666666666666" y="578.5" text-anchor="middle" fill="#7878b0" stroke="#7878b0" font-size="13.5">=</text>
<text x="373.67777777777775" y="578.5" text-anchor="middle" fill="#7878b0" stroke="#7878b0" font-size="13.5">=</text>
<text x="461.7888888888889" y="578.5" text-anchor="middle" fill="#7878b0" stroke="#7878b0" font-size="13.5">=</text>
<text x="549.9" y="578.5" text-anchor="middle" fill="#7878b0" stroke="#7878b0" font-size="13.5">=</text>
<text x="638.0111111111111" y="578.5" text-anchor="middle" fill="#7878b0" stroke="#7878b0" font-size="13.5">=</text>
<text x="726.1222222222223" y="578.5" text-anchor="middle" fill="#7878b0" stroke="#7878b0" font-size="13.5">=</text>
<text x="814.2333333333333" y="578.5" text-anchor="middle" fill="#7878b0" stroke="#7878b0" font-size="13.5">=</text>
<text x="902.3444444444444" y="578.5" text-anchor="middle" fill="#7878b0" stroke="#7878b0" font-size="13.5">=</text>
<text x="197.45555555555555" y="593.5" text-anchor="middle" fill="#7878b0" stroke="#7878b0" font-size="13.5">=</text>
<text x="285.56666666666666" y="593.5" text-anchor="middle" fill="#7878b0" stroke="#7878b0" font-size="13.5">=</text>
<text x="373.67777777777775" y="593.5" text-anchor="middle" fill="#7878b0" stroke="#7878b0" font-size="13.5">=</text>
<text x="461.7888888888889" y="593.5" text-anchor="middle" fill="#7878b0" stroke="#7878b0" font-size="13.5">=</text>
<text x="549.9" y="593.5" text-anchor="middle" fill="#7878b0" stroke="#7878b0" font-size="13.5">=</text>
<text x="638.0111111111111" y="593.5" text-anchor="middle" fill="#7878b0" stroke="#7878b0" font-size="13.5">=</text>
<text x="726.1222222222223" y="593.5" text-anchor="middle" fill="#7878b0" stroke="#7878b0" font-size="13.5">=</text>
<text x="814.2333333333333" y="593.5" text-anchor="middle" fill="#7878b0" stroke="#7878b0" font-size="13.5">=</text>
<text x="902.3444444444444" y="593.5" text-anchor="middle" fill="#7878b0" stroke="#7878b0" font-size="13.5">=</text>
<text x="197.45555555555555" y="623.5" text-anchor="middle" fill="#7878b0" stroke="#7878b0" font-size="13.5">=</text>
<text x="285.56666666666666" y="623.5" text-anchor="middle" fill="#7878b0" stroke="#7878b0" font-size="13.5">=</text>
<text x="373.67777777777775" y="623.5" text-anchor="middle" fill="#7878b0" stroke="#7878b0" font-size="13.5">=</text>
<text x="461.7888888888889" y="623.5" text-anchor="middle" fill="#7878b0" stroke="#7878b0" font-size="13.5">=</text>
<text x="549.9" y="623.5" text-anchor="middle" fill="#7878b0" stroke="#7878b0" font-size="13.5">=</text>
<text x="638.0111111111111" y="623.5" text-anchor="middle" fill="#7878b0" stroke="#7878b0" font-size="13.5">=</text>
<text x="726.1222222222223" y="623.5" text-anchor="middle" fill="#7878b0" stroke="#7878b0" font-size="13.5">=</text>
<text x="814.2333333333333" y="623.5" text-anchor="middle" fill="#7878b0" stroke="#7878b0" font-size="13.5">=</text>
<text x="902.3444444444444" y="623.5" text-anchor="middle" fill="#7878b0" stroke="#7878b0" font-size="13.5">=</text>
<text x="197.45555555555555" y="638.5" text-anchor="middle" fill="#7878b0" stroke="#7878b0" font-size="13.5">=</text>
<text x="285.56666666666666" y="638.5" text-anchor="middle" fill="#7878b0" stroke="#7878b0" font-size="13.5">=</text>
<text x="373.67777777777775" y="638.5" text-anchor="middle" fill="#7878b0" stroke="#7878b0" font-size="13.5">=</text>
<text x="461.7888888888889" y="638.5" text-anchor="middle" fill="#7878b0" stroke="#7878b0" font-size="13.5">=</text>
<text x="549.9" y="638.5" text-anchor="middle" fill="#7878b0" stroke="#7878b0" font-size="13.5">=</text>
<text x="638.0111111111111" y="638.5" text-anchor="middle" fill="#7878b0" stroke="#7878b0" font-size="13.5">=</text>
<text x="726.1222222222223" y="638.5" text-anchor="middle" fill="#7878b0" stroke="#7878b0" font-size="13.5">=</text>
<text x="814.2333333333333" y="638.5" text-anchor="middle" fill="#7878b0" stroke="#7878b0" font-size="13.5">=</text>
<text x="902.3444444444444" y="638.5" text-anchor="middle" fill="#7878b0" stroke="#7878b0" font-size="13.5">=</text>
<rect x="156" y="656" width="793" height="15" fill="#000" shape-rendering="crispEdges"/>
</svg>
</body></html>
